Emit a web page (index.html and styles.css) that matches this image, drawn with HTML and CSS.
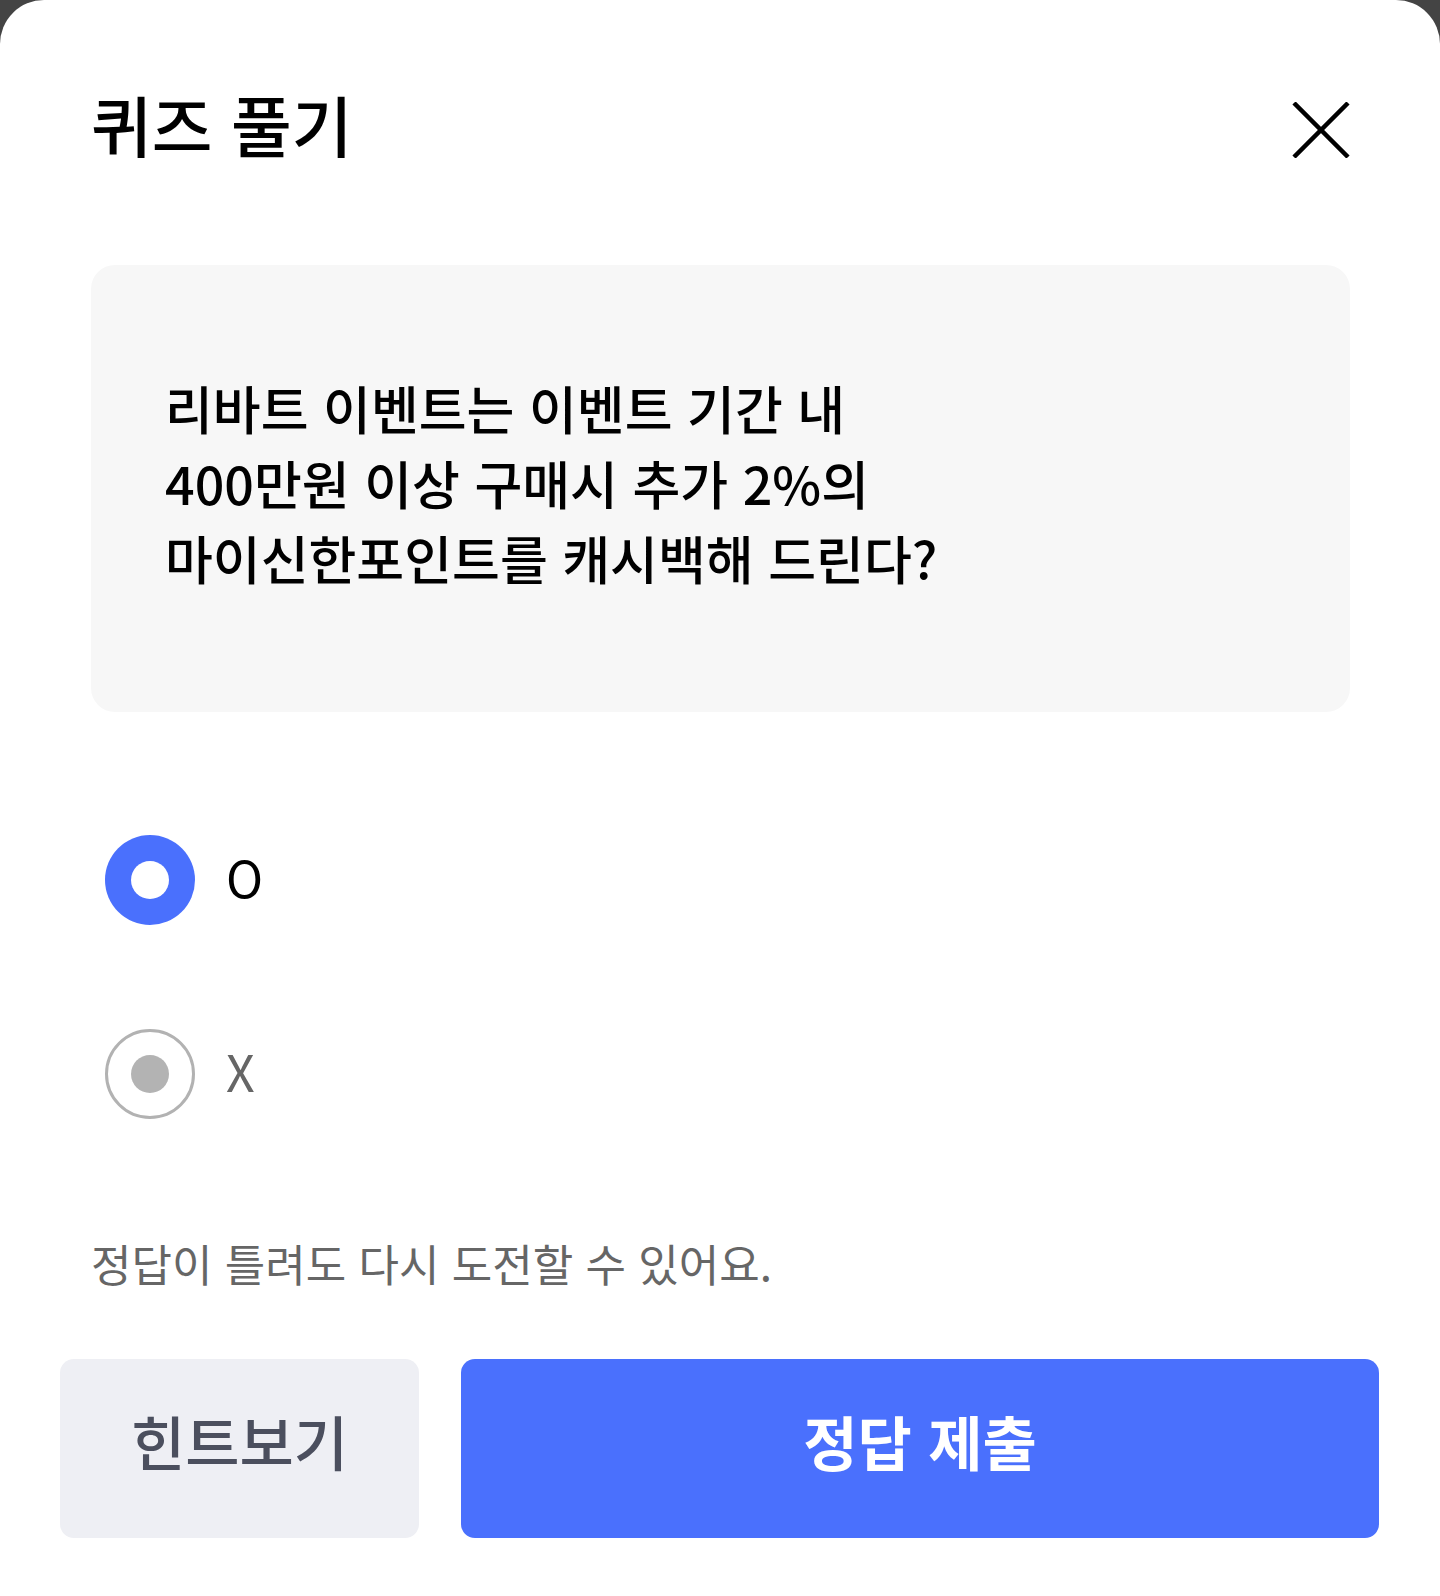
FILE: index.html
```html
<html lang="ko">
<head>
<meta charset="utf-8">
<title>퀴즈 풀기</title>
<link rel="stylesheet" href="styles.css">
</head>
<body>
  <div class="sheet">
    <div class="sheet-header">
      <h1 class="sheet-title">퀴즈 풀기</h1>
      <button class="close-btn" type="button" aria-label="닫기">
        <svg width="58" height="56" viewBox="0 0 58 56">
          <path d="M2 1 L56 55 M56 1 L2 55" stroke="#000" stroke-width="4.5" fill="none"/>
        </svg>
      </button>
    </div>

    <div class="question">
      <p>리바트 이벤트는 이벤트 기간 내<br>400만원 이상 구매시 추가 2%의<br>마이신한포인트를 캐시백해 드린다?</p>
    </div>

    <div class="options">
      <label class="option">
        <span class="radio radio-on"></span>
        <span class="option-label">O</span>
      </label>
      <label class="option">
        <span class="radio radio-off"></span>
        <span class="option-label off">X</span>
      </label>
    </div>

    <p class="notice">정답이 틀려도 다시 도전할 수 있어요.</p>

    <div class="actions">
      <button class="btn btn-hint" type="button">힌트보기</button>
      <button class="btn btn-submit" type="button">정답 제출</button>
    </div>
  </div>
</body>
</html>
```

FILE: styles.css
```css
body {
  margin: 0;
  background: #444;
  font-family: "Noto Sans CJK KR", "Noto Sans", sans-serif;
}

.sheet {
  background: #fff;
  border-radius: 44px 44px 0 0;
  min-height: 1596px;
  box-sizing: border-box;
  padding-top: 89px;
}

.sheet-header {
  display: flex;
  align-items: center;
  justify-content: space-between;
  height: 68px;
  padding: 0 90px 0 91px;
}

.sheet-title {
  margin: 0;
  font-size: 66px;
  font-weight: 500;
  color: #000;
  line-height: 68px;
}

.close-btn {
  border: none;
  background: none;
  padding: 0;
  width: 58px;
  height: 56px;
  display: flex;
  margin-top: 14px;
}

.question {
  margin: 108px 90px 0 91px;
  background: #f7f7f7;
  border-radius: 24px;
  height: 447px;
  box-sizing: border-box;
  padding: 0 74px 12px;
  display: flex;
  align-items: center;
}

.question p {
  margin: 0;
  font-size: 52px;
  font-weight: 500;
  line-height: 75px;
  color: #000;
}

.options {
  margin: 123px 92px 0 105px;
  display: flex;
  flex-direction: column;
  gap: 104px;
}

.option {
  display: flex;
  align-items: center;
  height: 90px;
  gap: 31px;
}

.radio {
  width: 90px;
  height: 90px;
  border-radius: 50%;
  box-sizing: border-box;
  display: flex;
  align-items: center;
  justify-content: center;
}

.radio::after {
  content: "";
  width: 38px;
  height: 38px;
  border-radius: 50%;
}

.radio-on {
  background: #4a70fd;
}

.radio-on::after {
  background: #fff;
}

.radio-off {
  border: 3px solid #b2b2b2;
}

.radio-off::after {
  background: #b3b3b3;
}

.option-label {
  font-size: 50px;
  color: #000;
  line-height: 1;
  padding-bottom: 8px;
}

.option-label.off {
  color: #666;
}

.notice {
  margin: 114px 0 0 91px;
  font-size: 44px;
  line-height: 60px;
  color: #666;
}

.actions {
  display: flex;
  gap: 42px;
  margin-top: 66px;
  padding: 0 61px 0 60px;
}

.btn {
  height: 179px;
  border: none;
  border-radius: 14px;
  font-family: inherit;
  font-size: 59px;
  font-weight: 500;
  padding: 0 0 16px;
  cursor: pointer;
}

.btn-hint {
  width: 359px;
  background: #eeeff4;
  color: #4b4f5e;
}

.btn-submit {
  flex: 1;
  background: #4a70fd;
  color: #fff;
  font-weight: 700;
}
```
